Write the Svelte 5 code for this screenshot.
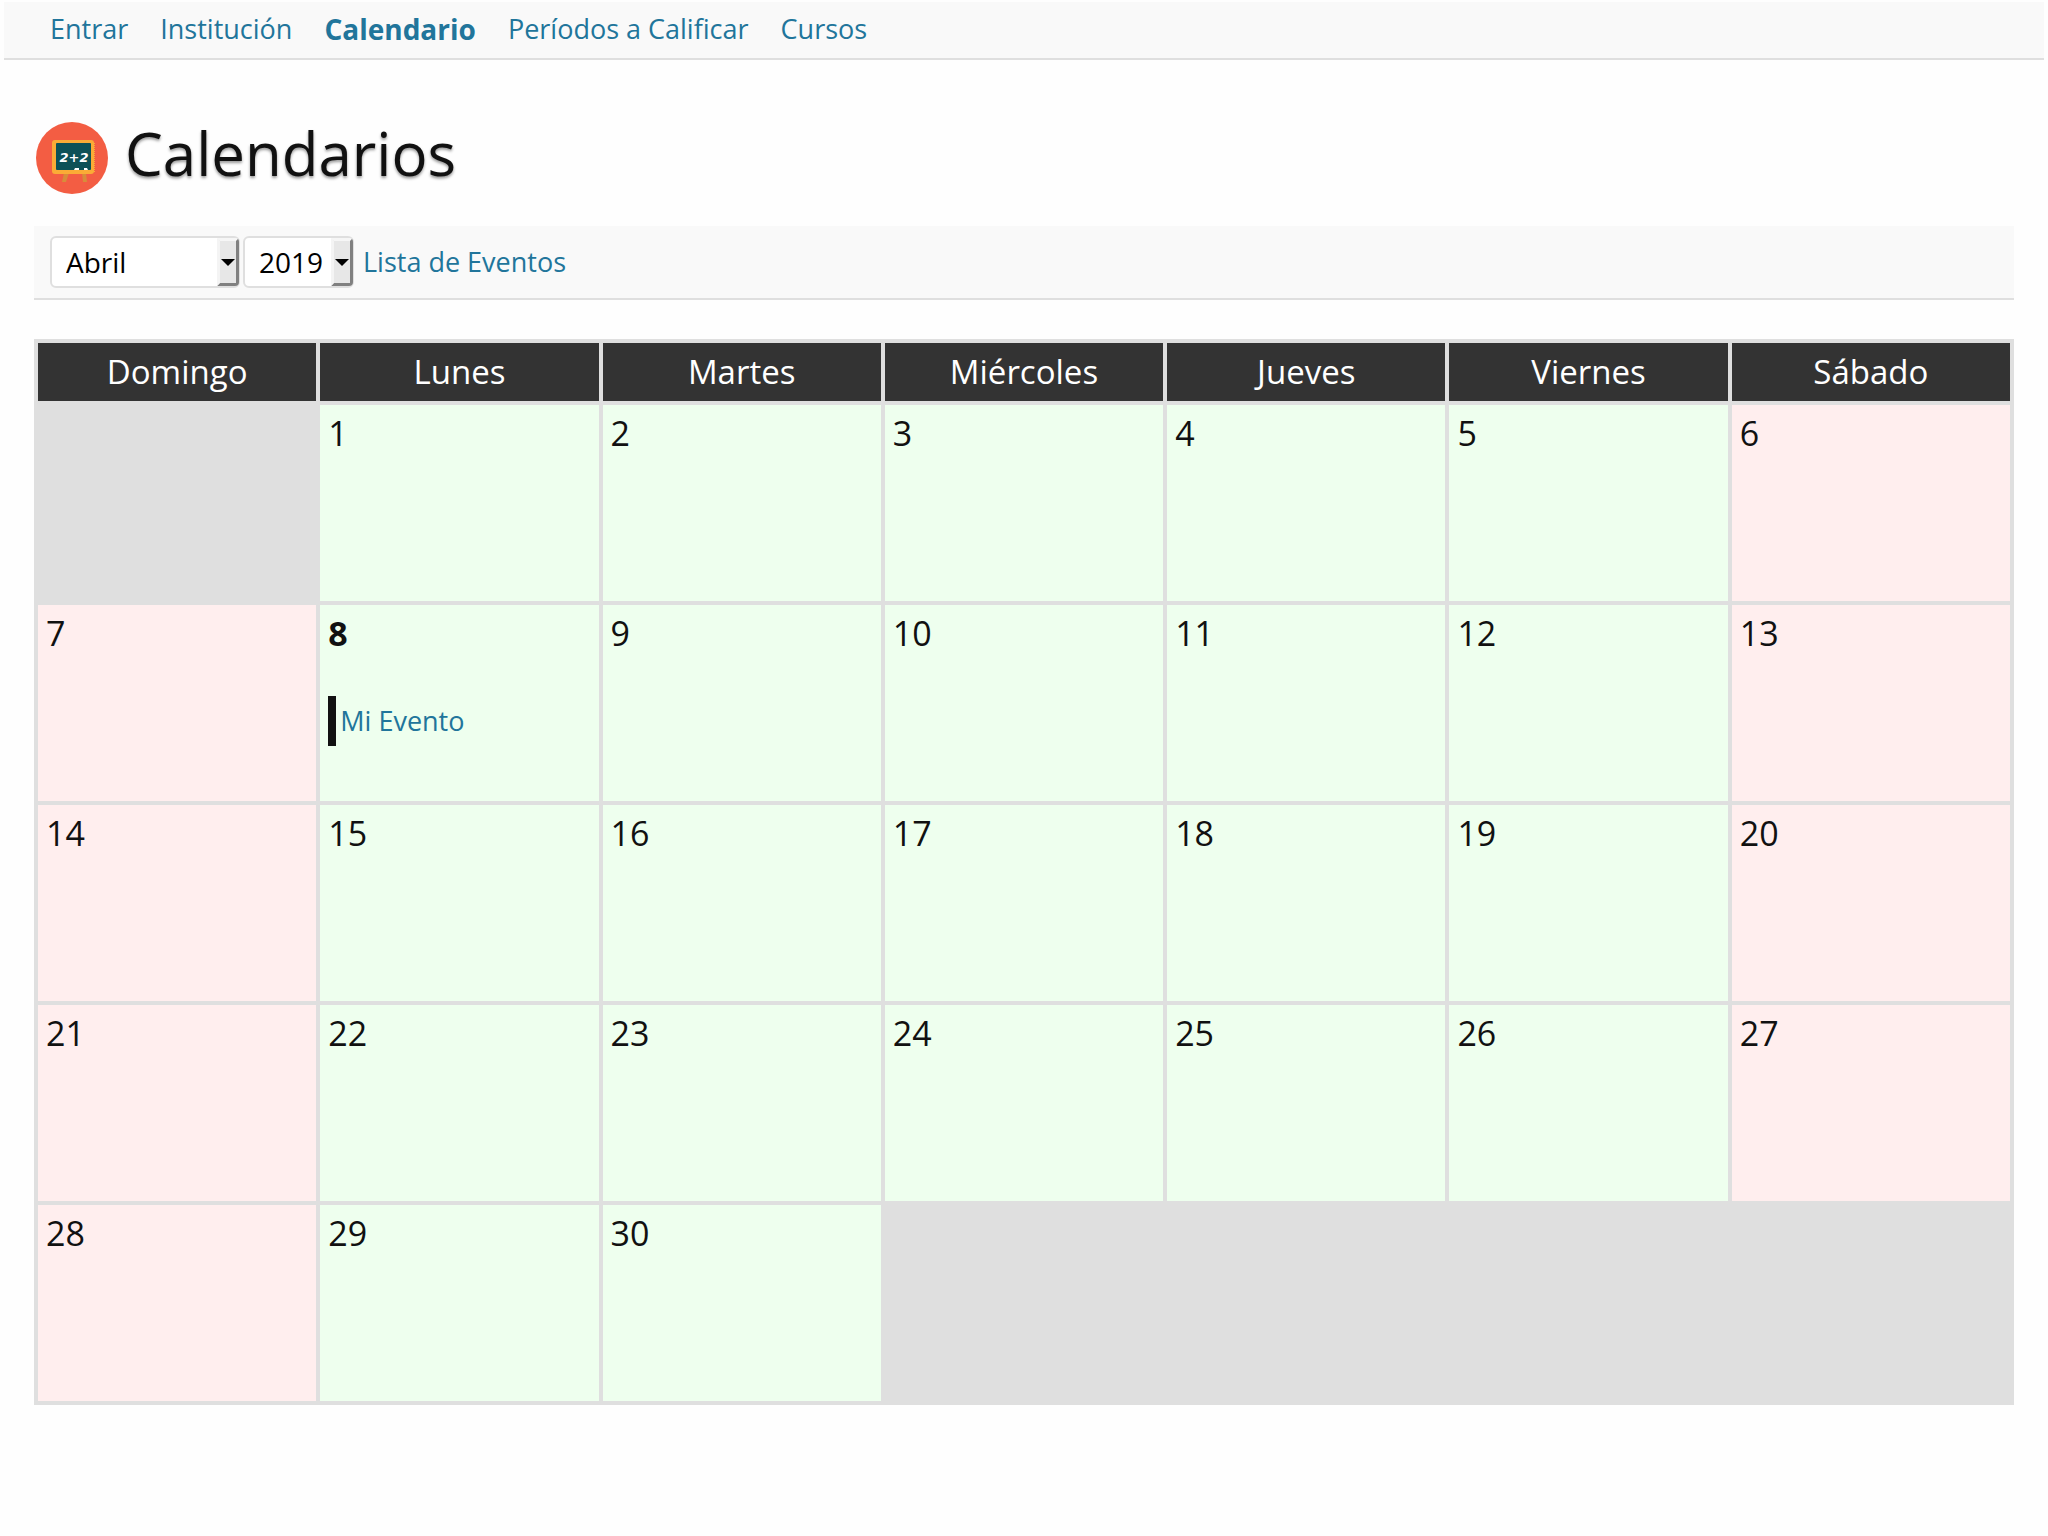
<script>
  const links = [
    { text: 'Entrar' },
    { text: 'Institución' },
    { text: 'Calendario', current: true },
    { text: 'Períodos a Calificar' },
    { text: 'Cursos' }
  ];
  const months = ['Enero', 'Febrero', 'Marzo', 'Abril', 'Mayo', 'Junio', 'Julio', 'Agosto', 'Septiembre', 'Octubre', 'Noviembre', 'Diciembre'];
  const years = [2017, 2018, 2019, 2020, 2021];
  const weekdays = ['Domingo', 'Lunes', 'Martes', 'Miércoles', 'Jueves', 'Viernes', 'Sábado'];
  const events = { 8: 'Mi Evento' };
  const today = 8;

  let month = $state('Abril');
  let year = $state(2019);

  // April 2019 begins on a Monday
  const weeks = Array.from({ length: 5 }, (_, w) =>
    Array.from({ length: 7 }, (_, d) => {
      const n = w * 7 + d;
      return n >= 1 && n <= 30 ? n : null;
    })
  );
</script>

<nav class="menu">
  {#each links as link}
    <a href="#top" class:current={link.current}>{link.text}</a>
  {/each}
</nav>

<main>
  <header class="title">
    <svg class="logo" viewBox="0 0 72 72" aria-hidden="true">
      <circle cx="36" cy="36" r="36" fill="#f35d43" />
      <path d="M28 51h5l-3 9h-4zM46 51h4l1 9h-4z" fill="#d88c3a" />
      <rect x="16" y="18" width="42" height="34" rx="3" fill="#fbab36" />
      <path d="M58.5 21v29" stroke="#fbab36" stroke-width="1" stroke-dasharray="1 1" />
      <rect x="20" y="21" width="35" height="27" rx="1" fill="#0d5157" />
      <path d="M39 46h4v2h-5zM48 46h3l1 2h-4z" fill="#fff" />
      <text x="38" y="40" text-anchor="middle" class="sum">2+2</text>
    </svg>
    <h1>Calendarios</h1>
  </header>

  <form class="filter">
    <span class="picker month">
      <select aria-label="Mes" bind:value={month}>
        {#each months as m}<option value={m}>{m}</option>{/each}
      </select>
      <span class="arrow"></span>
    </span>
    <span class="picker year">
      <select aria-label="Año" bind:value={year}>
        {#each years as y}<option value={y}>{y}</option>{/each}
      </select>
      <span class="arrow"></span>
    </span>
    <a href="#eventos">Lista de Eventos</a>
  </form>

  <table>
    <thead>
      <tr>
        {#each weekdays as day}<th scope="col">{day}</th>{/each}
      </tr>
    </thead>
    <tbody>
      {#each weeks as week}
        <tr>
          {#each week as day, i}
            {#if day}
              <td class="day" class:weekend={i === 0 || i === 6}>
                <span class="number" class:today={day === today}>{day}</span>
                {#if events[day]}
                  <div class="event"><a href="#evento">{events[day]}</a></div>
                {/if}
              </td>
            {:else}
              <td></td>
            {/if}
          {/each}
        </tr>
      {/each}
    </tbody>
  </table>
</main>

<style>
  :global(body) {
    background: #fefefe;
    color: #111;
    font: 27px/50px 'Open Sans', sans-serif;
  }

  a {
    color: #21759b;
    text-decoration: none;
  }

  .menu {
    display: flex;
    flex-wrap: wrap;
    gap: 0 32px;
    margin: 0 4px;
    padding: 4px 46px;
    background: linear-gradient(#fefefe 2px, #f9f9f9 2px);
    border-bottom: 2px solid #dfdfdf;
  }

  .current {
    font-size: 28px;
    font-weight: 700;
  }

  main {
    padding: 0 34px;
  }

  .title {
    display: flex;
    align-items: center;
    gap: 17px;
    padding: 47px 2px 27px;
  }

  .logo {
    width: 72px;
    height: 72px;
    margin-top: 10px;
  }

  .sum {
    fill: #fff;
    font: italic 700 13px 'DejaVu Sans', sans-serif;
  }

  h1 {
    margin: 0;
    font-size: 60px;
    line-height: 92px;
    font-weight: 400;
    text-shadow: 0 2px 3px rgba(0, 0, 0, 0.4);
  }

  .filter {
    display: flex;
    align-items: center;
    gap: 3px;
    padding: 10px 16px;
    background: #f9f9f9;
    border-bottom: 2px solid #dfdfdf;
  }

  .filter a {
    margin-left: 6px;
  }

  .picker {
    display: grid;
    height: 52px;
  }

  .month {
    width: 190px;
  }

  .year {
    width: 111px;
  }

  select {
    grid-area: 1 / 1;
    box-sizing: border-box;
    width: 100%;
    height: 100%;
    padding: 0 22px 0 14px;
    appearance: none;
    background: #fff;
    border: 2px solid #dfdfdf;
    border-radius: 6px;
    color: #000;
    font: inherit;
    font-size: 28px;
    line-height: 46px;
  }

  .year select {
    padding-right: 0;
  }

  .arrow {
    grid-area: 1 / 1;
    justify-self: end;
    display: grid;
    place-items: center;
    box-sizing: border-box;
    width: 22px;
    margin: 2px 1px 2px 0;
    background: #e7e7e7;
    border: 3px solid;
    border-color: #f6f6f6 #808080 #808080 #f4f4f4;
    border-radius: 0 4px 4px 0;
    pointer-events: none;
  }

  .arrow::before {
    content: '';
    border: 7px solid transparent;
    border-top-color: #000;
    border-bottom: 0;
  }

  table {
    width: 100%;
    margin-top: 39px;
    table-layout: fixed;
    border-collapse: separate;
    border-spacing: 4px;
    background: #dfdfdf;
    font-size: 34px;
  }

  th {
    padding: 4px 0;
    background: #333;
    color: #fff;
    font-size: 33px;
    font-weight: 400;
    text-align: center;
  }

  td {
    box-sizing: border-box;
    height: 196px;
    padding: 3px 8px;
    vertical-align: top;
  }

  .day {
    background: #efe;
  }

  .weekend {
    background: #fee;
  }

  .number {
    display: block;
  }

  .today {
    font-weight: 700;
  }

  .event {
    margin-top: 38px;
    padding-left: 4px;
    border-left: 8px solid #111;
    font-size: 27px;
  }
</style>
